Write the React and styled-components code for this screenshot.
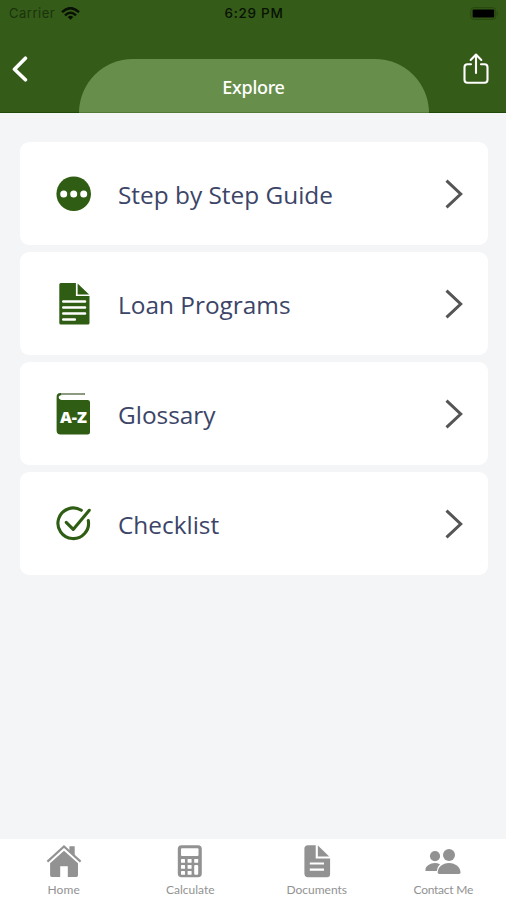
import React from 'react';
import styled, { createGlobalStyle } from 'styled-components';

const GlobalStyle = createGlobalStyle`
  * {
    box-sizing: border-box;
  }

  body {
    margin: 0;
    background-color: #f3f5f7;
  }
`;

const Screen = styled.div`
  width: 506px;
  height: 900px;
  display: flex;
  flex-direction: column;
  overflow: hidden;
  background-color: #f3f5f7;
`;

const Header = styled.header`
  height: 113px;
  flex-shrink: 0;
  background-color: #345b18;
  box-shadow: inset 0 -1px 0 #1f4a0c;
`;

const StatusBar = styled.div`
  height: 27px;
  display: grid;
  grid-template-columns: 1fr auto 1fr;
  align-items: center;
  padding: 0 7px 0 9px;
  font-family: 'Inter', sans-serif;
  font-size: 13px;
  line-height: 27px;
  color: #1a330d;
`;

const Carrier = styled.div`
  display: flex;
  align-items: center;
  gap: 6px;
  letter-spacing: 0.5px;
`;

const Clock = styled.div`
  font-weight: 500;
  font-size: 13.5px;
  letter-spacing: 0.7px;
  color: #081104;
`;

const Battery = styled.div`
  display: flex;
  justify-content: flex-end;
`;

const TitleBar = styled.div`
  height: 86px;
  display: flex;
  justify-content: space-between;
`;

const IconButton = styled.button`
  width: ${props => props.$width}px;
  padding: ${props => props.$padding};
  border: 0;
  background: none;
  display: flex;
  align-items: flex-start;
`;

const TitleTab = styled.h1`
  width: 350px;
  height: 54px;
  margin: 32px 0 0;
  padding: 16px 1px 0 0;
  border-radius: 54px 54px 0 0;
  background-color: #688e4c;
  border-bottom: 1px solid #517a35;
  color: #fff;
  font-family: 'Noto Sans', sans-serif;
  font-size: 18px;
  font-weight: 500;
  line-height: 24px;
  letter-spacing: -0.3px;
  text-align: center;
`;

const Menu = styled.main`
  flex: 1;
  display: flex;
  flex-direction: column;
  gap: 7px;
  padding: 29px 18px 0 20px;
`;

const MenuItem = styled.div`
  height: 103px;
  display: flex;
  align-items: center;
  padding: 0 24px 0 33px;
  border-radius: 9px;
  background-color: #fff;
`;

const MenuIcon = styled.div`
  width: 42px;
  height: 48px;
`;

const MenuLabel = styled.span`
  flex: 1;
  padding: 2px 0 0 23px;
  color: #3c4568;
  font-family: 'Open Sans', sans-serif;
  font-size: 24.4px;
  line-height: 32px;
`;

const TabBar = styled.nav`
  height: 61px;
  display: grid;
  grid-template-columns: repeat(4, 1fr);
  background-color: #fff;
`;

const Tab = styled.div`
  display: flex;
  flex-direction: column;
  align-items: center;
  padding: 5px 0 0 1px;
  color: #929292;
`;

const TabLabel = styled.span`
  margin-top: 4px;
  font-family: 'Lato', sans-serif;
  font-size: 12px;
  line-height: 16px;
  letter-spacing: ${props => props.$spacing || 0}px;
`;

const GREEN = '#2f5d13';

const WifiIcon = () => (
  <svg width="19" height="14" viewBox="0 0 19 14" fill="none" stroke="#081104" strokeWidth="2.5">
    <path d="M1 5.1Q9.5-2.8 18 5.1" />
    <path d="M4 8.3Q9.5 3.3 15 8.3" />
    <path d="M9.5 12.8 6.7 10Q9.5 7.6 12.3 10Z" fill="#081104" stroke="none" />
  </svg>
);

const BatteryIcon = () => (
  <svg width="29" height="13" viewBox="0 0 29 13">
    <rect x="0.8" y="0.7" width="25" height="11.6" rx="3" fill="none" stroke="#28480f" />
    <rect x="2.6" y="2.5" width="21.6" height="8" rx="1" fill="#000" />
    <path d="M27 4.5Q29 6.5 27 8.5Z" fill="#28480f" />
  </svg>
);

const BackIcon = () => (
  <svg width="16" height="26" viewBox="0 0 16 26" fill="none" stroke="#fff" strokeWidth="3.6" strokeLinecap="round" strokeLinejoin="round">
    <path d="M13.4 2.2 2.5 13.2 13.4 23.8" />
  </svg>
);

const ShareIcon = () => (
  <svg width="26" height="32" viewBox="0 0 26 32" fill="none" stroke="#fff" strokeWidth="2.1" strokeLinecap="round" strokeLinejoin="round">
    <path d="M8 11.2H4.5A3 3 0 0 0 1.5 14.2V26.8A3 3 0 0 0 4.5 29.8H21.5A3 3 0 0 0 24.5 26.8V14.2A3 3 0 0 0 21.5 11.2H18" />
    <path d="M13 20V2M7.7 7 13 1.6 18.3 7" />
  </svg>
);

const ChevronIcon = () => (
  <svg width="20" height="30" viewBox="0 0 20 30" fill="none" stroke="#555" strokeWidth="3">
    <path d="M2.5 1.7 16.7 15 2.5 28.3" />
  </svg>
);

const StepsIcon = () => (
  <svg width="42" height="48" viewBox="0 0 42 48">
    <circle cx="20.7" cy="23.8" r="17.3" fill={GREEN} />
    {[10.7, 20.7, 30.7].map(x => (
      <circle key={x} cx={x} cy="24" r="3.5" fill="#fff" />
    ))}
  </svg>
);

const LoanIcon = () => (
  <svg width="42" height="48" viewBox="0 0 42 48">
    <path d="M7.8 3H22.9V16H36.5V43Q36.5 44.5 35 44.5H7.8Q6.3 44.5 6.3 43V4.5Q6.3 3 7.8 3Z" fill={GREEN} />
    <path d="M24.6 3.6 36.1 14.6H24.6Z" fill={GREEN} />
    <path d="M10.3 21.5H32M10.3 27.5H32M10.3 33.5H32M10.3 39.5H21.8" stroke="#fff" strokeWidth="2.6" strokeLinecap="round" />
  </svg>
);

const GlossaryIcon = () => (
  <svg width="42" height="48" viewBox="0 0 42 48">
    <path d="M31.8 3H7.5A4 4 0 0 0 3.6 7V40.5A4 4 0 0 0 7.6 44.5H34.5Q37 44.5 37 42V12.3Q37 10 34.5 10H8.5Q5.2 9.4 5.8 6.6Q6.4 5 9 5H31.8Z" fill={GREEN} />
    <path d="M8 4H31.8" stroke="#8b9a80" strokeWidth="2" />
    <text x="20.5" y="32.6" textAnchor="middle" textLength="27" lengthAdjust="spacingAndGlyphs" fill="#fff" fontFamily="'Open Sans', sans-serif" fontWeight="800" fontSize="15.5">A-Z</text>
  </svg>
);

const ChecklistIcon = () => (
  <svg width="42" height="48" viewBox="0 0 42 48" fill="none" stroke={GREEN} strokeWidth="3.1" strokeLinecap="round" strokeLinejoin="round">
    <path d="M28.3 10.3A15.3 15.3 0 1 0 35.3 20.6" />
    <path d="M13.2 22.3 20.2 29.4 36.3 10.3" />
  </svg>
);

const HomeIcon = () => (
  <svg width="36" height="34" viewBox="0 0 36 34" fill="currentColor">
    <path d="M23.4 2.3H28.7V12.5L23.4 7.4Z" />
    <path d="M1.4 17.6 18 2.5 34.6 17.6" fill="none" stroke="currentColor" strokeWidth="2.1" />
    <path d="M18 6.7 32 19.2V31.3Q32 33 30.3 33H21.8V22.2H14.2V33H5.8Q4.1 33 4.1 31.3V19.2Z" />
  </svg>
);

const CalculatorIcon = () => (
  <svg width="36" height="34" viewBox="0 0 36 34">
    <rect x="5.8" y="1.2" width="24" height="32" rx="3.8" fill="currentColor" />
    <g fill="#fff">
      <rect x="9" y="4.2" width="17.5" height="7.8" rx="1" />
      {[[9, 15], [15.6, 15], [22.2, 15], [9, 21], [15.6, 21], [9, 27], [15.6, 27]].map(([x, y]) => (
        <rect key={`${x}-${y}`} x={x} y={y} width="4" height="3.8" rx="0.6" />
      ))}
      <rect x="22.2" y="21" width="4" height="9.8" rx="1" />
    </g>
  </svg>
);

const DocumentIcon = () => (
  <svg width="36" height="34" viewBox="0 0 36 34">
    <path d="M9 1.2H16.7V14.6H31.1V30Q31.1 33.2 27.9 33.2H9Q5.4 33.2 5.4 29.6V4.8Q5.4 1.2 9 1.2Z" fill="currentColor" />
    <path d="M18.9 1.6 30.2 12.6H18.9Z" fill="currentColor" />
    <path d="M10.8 19.5H25M10.8 25.6H25" stroke="#fff" strokeWidth="2.1" />
  </svg>
);

const ContactIcon = () => (
  <svg width="36" height="34" viewBox="0 0 36 34" fill="currentColor">
    <circle cx="10" cy="12.1" r="5.1" />
    <path d="M.5 27V25.5C.5 22.2 5.4 19.1 9.7 19.1Q12.5 19.1 15 20.2Q12 22.8 11.8 27Z" />
    <circle cx="24" cy="11" r="6" />
    <path d="M12.7 28.6C12.7 23.3 17.5 19 24 19S35.5 23.3 35.5 28.6Q35.5 30 34.1 30H14.1Q12.7 30 12.7 28.6Z" />
  </svg>
);

const menuItems = [
  { label: 'Step by Step Guide', Icon: StepsIcon },
  { label: 'Loan Programs', Icon: LoanIcon },
  { label: 'Glossary', Icon: GlossaryIcon },
  { label: 'Checklist', Icon: ChecklistIcon },
];

const tabs = [
  { label: 'Home', Icon: HomeIcon, spacing: 0.1 },
  { label: 'Calculate', Icon: CalculatorIcon },
  { label: 'Documents', Icon: DocumentIcon },
  { label: 'Contact Me', Icon: ContactIcon, spacing: -0.25 },
];

const App = () => (
  <>
    <GlobalStyle />
    <Screen>
      <Header>
        <StatusBar>
          <Carrier>
            Carrier
            <WifiIcon />
          </Carrier>
          <Clock>6:29 PM</Clock>
          <Battery>
            <BatteryIcon />
          </Battery>
        </StatusBar>
        <TitleBar>
          <IconButton $width={79} $padding="29px 0 0 12px" aria-label="Back">
            <BackIcon />
          </IconButton>
          <TitleTab>Explore</TitleTab>
          <IconButton $width={77} $padding="26px 0 0 34px" aria-label="Share">
            <ShareIcon />
          </IconButton>
        </TitleBar>
      </Header>
      <Menu>
        {menuItems.map(({ label, Icon }) => (
          <MenuItem key={label}>
            <MenuIcon>
              <Icon />
            </MenuIcon>
            <MenuLabel>{label}</MenuLabel>
            <ChevronIcon />
          </MenuItem>
        ))}
      </Menu>
      <TabBar>
        {tabs.map(({ label, Icon, spacing }) => (
          <Tab key={label}>
            <Icon />
            <TabLabel $spacing={spacing}>{label}</TabLabel>
          </Tab>
        ))}
      </TabBar>
    </Screen>
  </>
);

export default App;
